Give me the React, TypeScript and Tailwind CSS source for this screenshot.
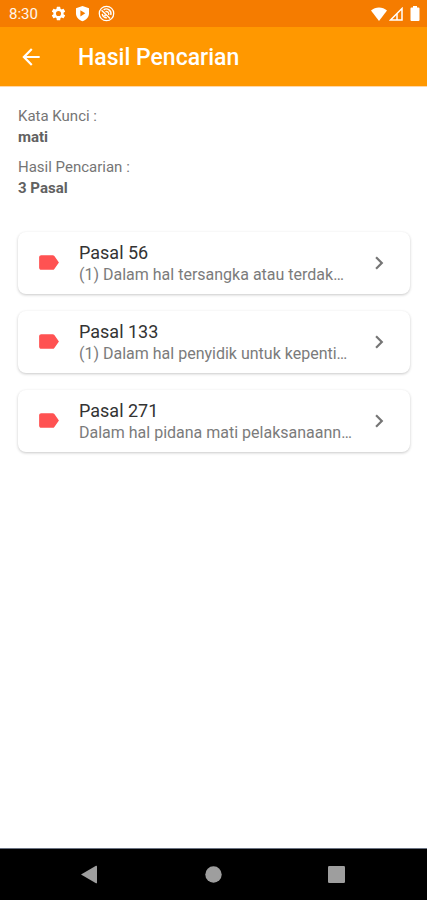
type Pasal = {
  id: number
  title: string
  excerpt: string
}

const keyword = "mati"

const results: Pasal[] = [
  { id: 56, title: "Pasal 56", excerpt: "(1) Dalam hal tersangka atau terdak…" },
  { id: 133, title: "Pasal 133", excerpt: "(1) Dalam hal penyidik untuk kepenti…" },
  { id: 271, title: "Pasal 271", excerpt: "Dalam hal pidana mati pelaksanaann…" },
]

function StatusBar() {
  return (
    <div className="flex h-[27px] items-center bg-[#F57C00] pl-[9px] pr-[7px] text-white">
      <span className="text-[15px] leading-5 text-orange-50">8:30</span>
      <div className="ml-[12px] flex items-center gap-[7px]">
        {/* Settings */}
        <svg width="17" height="17" viewBox="0 0 24 24" fill="currentColor" aria-hidden="true">
          <path d="M19.14 12.94c.04-.3.06-.61.06-.94 0-.32-.02-.64-.07-.94l2.03-1.58a.49.49 0 0 0 .12-.61l-1.92-3.32a.49.49 0 0 0-.59-.22l-2.39.96c-.5-.38-1.03-.7-1.62-.94l-.36-2.54A.48.48 0 0 0 13.92 2.4h-3.84a.48.48 0 0 0-.47.41l-.36 2.54c-.59.24-1.13.57-1.62.94l-2.39-.96a.48.48 0 0 0-.59.22L2.74 8.87a.48.48 0 0 0 .12.61l2.03 1.58c-.05.3-.09.63-.09.94s.02.64.07.94l-2.03 1.58a.49.49 0 0 0-.12.61l1.92 3.32c.12.22.37.29.59.22l2.39-.96c.5.38 1.03.7 1.62.94l.36 2.54c.05.24.24.41.48.41h3.84c.24 0 .44-.17.47-.41l.36-2.54c.59-.24 1.13-.56 1.62-.94l2.39.96c.22.08.47 0 .59-.22l1.92-3.32a.48.48 0 0 0-.12-.61zM12 15.6a3.6 3.6 0 1 1 0-7.2 3.6 3.6 0 0 1 0 7.2z" />
        </svg>
        {/* Play Protect */}
        <svg width="17" height="17" viewBox="0 0 24 24" fill="currentColor" fillRule="evenodd" aria-hidden="true">
          <path d="M12 1.5 2.8 4.5V12c0 5 4 9 9.2 11 5.2-2 9.2-6 9.2-11V4.5zM9 7.5v8.6l7-4.3z" />
        </svg>
        {/* Blocked sync */}
        <svg width="17" height="17" viewBox="0 0 24 24" fill="none" stroke="currentColor" strokeWidth="1.8" aria-hidden="true">
          <circle cx="12" cy="12" r="10.2" />
          <path d="M5 7.5 17 19" strokeWidth="2" />
          <path d="M6 12.5a6 6 0 0 0 6.5 5.5M8 6.8a6.5 6.5 0 0 1 10 7.2M10.5 9.5a3.5 3.5 0 0 1 4.5 4.500M9 14l2 2" strokeWidth="2" />
        </svg>
      </div>
      <div className="ml-auto flex items-center">
        <svg width="16" height="14" viewBox="0 0 16 14" fill="currentColor" aria-hidden="true">
          <path d="M8 14 0 3.5C4.5-.5 11.5-.5 16 3.5z" />
        </svg>
        <svg className="ml-[2px]" width="14" height="14" viewBox="0 0 14 14" fill="none" stroke="currentColor" strokeWidth="1.5" aria-hidden="true">
          <path d="M1.5 13 13 1.5V13z" />
          <path d="M8 7v6" />
        </svg>
        <svg className="ml-[7px]" width="10" height="15" viewBox="0 0 10 15" fill="currentColor" aria-hidden="true">
          <path d="M3 0h4v1.5h1.5q1 0 1 1V14q0 1-1 1h-7q-1 0-1-1V2.5q0-1 1-1H3z" />
        </svg>
      </div>
    </div>
  )
}

function ResultCard({ item }: { item: Pasal }) {
  return (
    <a
      href={`#pasal-${item.id}`}
      className="flex items-center rounded-lg bg-white px-[18px] pb-[8px] pt-[7px] shadow-[0_1px_3px_rgba(0,0,0,0.22)]"
    >
      <svg className="shrink-0" width="25" height="25" viewBox="0 0 24 24" fill="#FF5252" aria-hidden="true">
        <path d="M17.63 5.84C17.27 5.33 16.67 5 16 5L5 5.01C3.9 5.01 3 5.9 3 7v10c0 1.1.9 1.99 2 1.99L16 19c.67 0 1.27-.33 1.63-.84L22 12z" />
      </svg>
      <div className="ml-[18px] min-w-0 flex-1 pt-[3px]">
        <h2 className="text-[18px] leading-[22px] text-[#333333]">{item.title}</h2>
        <p className="whitespace-nowrap text-[16px] leading-[22px] text-[#7b7b7b]">{item.excerpt}</p>
      </div>
      <svg className="shrink-0" width="26" height="26" viewBox="0 0 24 24" fill="#757575" aria-hidden="true">
        <path d="M10 6 8.59 7.41 13.17 12l-4.58 4.59L10 18l6-6z" />
      </svg>
    </a>
  )
}

export default function App() {
  return (
    <div className="flex min-h-screen flex-col bg-white font-['Roboto',sans-serif]">
      <StatusBar />

      <header className="flex h-[60px] items-center border-b border-orange-200 bg-[#FF9800] pl-[18px] text-white">
        <button type="button" aria-label="Kembali" className="shrink-0">
          <svg width="26" height="26" viewBox="0 0 24 24" fill="currentColor" aria-hidden="true">
            <path d="M20 11H7.83l5.59-5.59L12 4l-8 8 8 8 1.41-1.41L7.83 13H20z" />
          </svg>
        </button>
        <h1 className="ml-[34px] pt-[2px] text-[23px] font-medium leading-7">Hasil Pencarian</h1>
      </header>

      <main className="flex-1 pb-6 pl-[18px] pr-[17px] pt-[19px]">
        <dl className="text-[15px] leading-[21px] text-[#757575]">
          <dt>Kata Kunci :</dt>
          <dd className="font-bold text-[#616161]">{keyword}</dd>
          <dt className="mt-[9px]">Hasil Pencarian :</dt>
          <dd className="font-bold text-[#616161]">{results.length} Pasal</dd>
        </dl>

        <div className="mt-[33px] flex flex-col gap-[17px]">
          {results.map((item) => (
            <ResultCard key={item.id} item={item} />
          ))}
        </div>
      </main>

      {/* System navigation */}
      <nav className="grid h-[52px] grid-cols-[1fr_auto_1fr] items-center border-t border-gray-500 bg-black text-[#9e9e9e]">
        <button type="button" aria-label="Back" className="mr-[107px] justify-self-end">
          <svg width="17" height="19" viewBox="0 0 17 19" fill="currentColor" aria-hidden="true">
            <path d="M0 9.5 15 .8q1-.5 1 .7v16q0 1.2-1 .7z" />
          </svg>
        </button>
        <button type="button" aria-label="Home">
          <svg width="17" height="17" viewBox="0 0 17 17" fill="currentColor" aria-hidden="true">
            <circle cx="8.5" cy="8.5" r="8.2" />
          </svg>
        </button>
        <button type="button" aria-label="Recents" className="ml-[106px] justify-self-start">
          <svg width="17" height="17" viewBox="0 0 17 17" fill="currentColor" aria-hidden="true">
            <rect width="17" height="17" rx="1.2" />
          </svg>
        </button>
      </nav>
    </div>
  )
}
